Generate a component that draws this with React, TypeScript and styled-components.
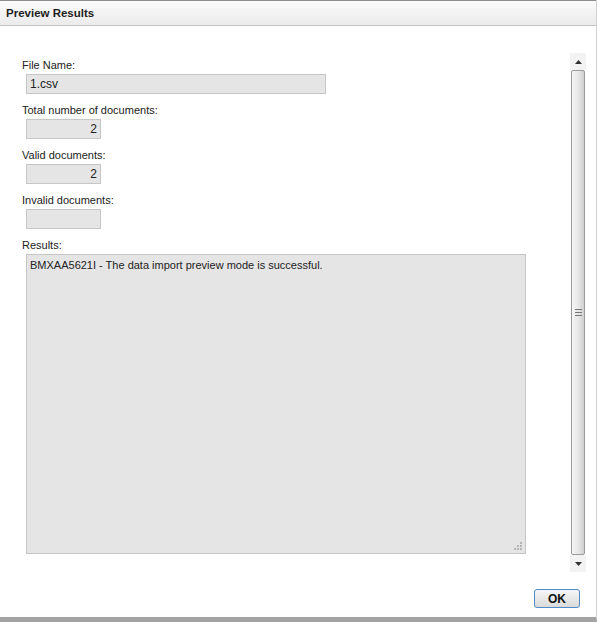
import React from "react";
import styled, { createGlobalStyle } from "styled-components";

const GlobalStyle = createGlobalStyle`
  html, body {
    margin: 0;
    padding: 0;
    background: #ffffff;
  }
  body {
    font-family: "Liberation Sans", Arial, sans-serif;
    font-size: 11px;
    color: #222;
  }
`;

const Dialog = styled.div`
  width: 597px;
  height: 622px;
  box-sizing: border-box;
  display: flex;
  flex-direction: column;
  background: #fff;
  border-right: 1px solid #d0d0d0;
  border-bottom: 5px solid #a3a3a3;
`;

const TitleBar = styled.div`
  height: 26px;
  box-sizing: border-box;
  border-top: 1px solid #8e8e8e;
  border-bottom: 1px solid #c4c4c4;
  background: linear-gradient(#fbfbfb, #ebebeb);
  display: flex;
  align-items: center;
  padding-left: 6px;
  font-weight: bold;
  font-size: 11.5px;
  color: #1e1e1e;
`;

const Body = styled.div`
  flex: 1;
  display: flex;
  min-height: 0;
`;

const Form = styled.div`
  flex: 1;
  padding: 32px 0 0 22px;
  display: flex;
  flex-direction: column;
`;

const Field = styled.div`
  display: flex;
  flex-direction: column;
  margin-bottom: 9px;
`;

const Label = styled.label`
  line-height: 14px;
  height: 14px;
  margin-bottom: 2px;
  color: #222;
`;

type BoxProps = { $width: number; $numeric?: boolean };

const Box = styled.div<BoxProps>`
  margin-left: 4px;
  width: ${(p) => p.$width}px;
  height: 20px;
  box-sizing: border-box;
  background: #e5e5e5;
  border: 1px solid #c6c6c6;
  line-height: 18px;
  padding: 0 3px;
  font-size: 12px;
  text-align: ${(p) => (p.$numeric ? "right" : "left")};
  color: #222;
`;

const TextArea = styled.div`
  position: relative;
  margin-left: 4px;
  width: 500px;
  height: 300px;
  box-sizing: border-box;
  background: #e5e5e5;
  border: 1px solid #c6c6c6;
  padding: 2px 3px;
  line-height: 16px;
  color: #222;
`;

const Grip = styled.svg`
  position: absolute;
  right: 2px;
  bottom: 2px;
`;

const ScrollBar = styled.div`
  width: 16px;
  margin: 27px 10px 6px 0;
  display: flex;
  flex-direction: column;
`;

const Arrow = styled.div`
  height: 17px;
  background: #f3f3f3;
  display: flex;
  align-items: center;
  justify-content: center;
`;

const Thumb = styled.div`
  flex: 1;
  margin: 0 1px;
  box-sizing: border-box;
  border: 1px solid #9a9a9a;
  border-radius: 2px;
  background: linear-gradient(to right, #f6f6f6, #e4e4e4 60%, #cfcfcf);
  display: flex;
  align-items: center;
  justify-content: center;
`;

const Footer = styled.div`
  height: 39px;
  display: flex;
  justify-content: flex-end;
  align-items: flex-start;
  padding: 11px 16px 0 0;
  box-sizing: border-box;
`;

const Button = styled.button`
  width: 46px;
  height: 19px;
  box-sizing: border-box;
  border: 1px solid #4f8cc9;
  border-radius: 3px;
  background: linear-gradient(#f7f7f7, #dadada);
  font-family: "Liberation Sans", Arial, sans-serif;
  font-weight: bold;
  font-size: 12px;
  color: #111;
  padding: 0;
  cursor: pointer;
`;

const gripDots = [
  [8, 2],
  [5, 5],
  [8, 5],
  [2, 8],
  [5, 8],
  [8, 8],
];

export default function App() {
  return (
    <>
      <GlobalStyle />
      <Dialog>
        <TitleBar>Preview Results</TitleBar>
        <Body>
          <Form>
            <Field>
              <Label>File Name:</Label>
              <Box $width={300}>1.csv</Box>
            </Field>
            <Field>
              <Label>Total number of documents:</Label>
              <Box $width={75} $numeric>
                2
              </Box>
            </Field>
            <Field>
              <Label>Valid documents:</Label>
              <Box $width={75} $numeric>
                2
              </Box>
            </Field>
            <Field>
              <Label>Invalid documents:</Label>
              <Box $width={75} $numeric />
            </Field>
            <Field>
              <Label>Results:</Label>
              <TextArea>
                BMXAA5621I - The data import preview mode is successful.
                <Grip width="10" height="10" viewBox="0 0 10 10">
                  {gripDots.map(([x, y]) => (
                    <rect key={`${x}-${y}`} x={x - 1} y={y - 1} width="2" height="2" fill="#b5b5b5" />
                  ))}
                </Grip>
              </TextArea>
            </Field>
          </Form>
          <ScrollBar>
            <Arrow>
              <svg width="7" height="4" viewBox="0 0 7 4">
                <path d="M0 4 L3.5 0 L7 4 Z" fill="#333" />
              </svg>
            </Arrow>
            <Thumb>
              <svg width="7" height="7" viewBox="0 0 7 7">
                <path d="M0 0.5 H7 M0 3.5 H7 M0 6.5 H7" stroke="#777" strokeWidth="1" />
              </svg>
            </Thumb>
            <Arrow>
              <svg width="7" height="4" viewBox="0 0 7 4">
                <path d="M0 0 L7 0 L3.5 4 Z" fill="#333" />
              </svg>
            </Arrow>
          </ScrollBar>
        </Body>
        <Footer>
          <Button>OK</Button>
        </Footer>
      </Dialog>
    </>
  );
}
